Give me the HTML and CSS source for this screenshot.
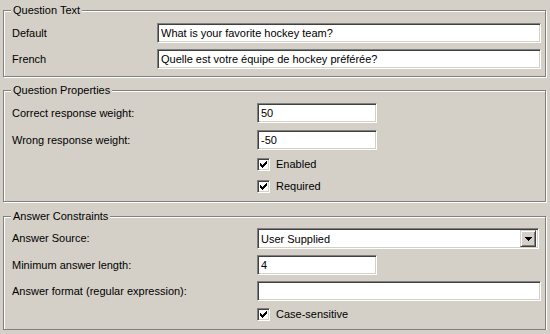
FILE: index.html
```html
<!DOCTYPE html>
<html lang="en">

<head>
    <meta charset="UTF-8">
    <title>Question Editor</title>
    <link rel="stylesheet" href="styles.css">
</head>

<body>
    <div class="dialog">
        <section class="group group-text">
            <div class="group-title">Question Text</div>
            <div class="fields">
                <label class="field-label">Default</label>
                <input class="edit" type="text" value="What is your favorite hockey team?">
                <label class="field-label">French</label>
                <input class="edit" type="text" value="Quelle est votre équipe de hockey préférée?">
            </div>
        </section>

        <section class="group group-props">
            <div class="group-title">Question Properties</div>
            <div class="fields">
                <label class="field-label">Correct response weight:</label>
                <input class="edit edit-short" type="text" value="50">
                <label class="field-label">Wrong response weight:</label>
                <input class="edit edit-short" type="text" value="-50">
                <label class="check">
                    <span class="check-box">
                        <svg viewBox="0 0 7 7" width="7" height="7">
                            <path d="M0 2h1v3H0zM1 3h1v3H1zM2 4h1v3H2zM3 3h1v3H3zM4 2h1v3H4zM5 1h1v3H5zM6 0h1v3H6z" />
                        </svg>
                    </span>
                    Enabled
                </label>
                <label class="check">
                    <span class="check-box">
                        <svg viewBox="0 0 7 7" width="7" height="7">
                            <path d="M0 2h1v3H0zM1 3h1v3H1zM2 4h1v3H2zM3 3h1v3H3zM4 2h1v3H4zM5 1h1v3H5zM6 0h1v3H6z" />
                        </svg>
                    </span>
                    Required
                </label>
            </div>
        </section>

        <section class="group group-answer">
            <div class="group-title">Answer Constraints</div>
            <div class="fields">
                <label class="field-label">Answer Source:</label>
                <div class="combo">
                    <span class="combo-text">User Supplied</span>
                    <span class="combo-button">
                        <svg viewBox="0 0 7 4" width="7" height="4">
                            <path d="M0 0h7v1H6v1H5v1H4v1H3V3H2V2H1V1H0z" />
                        </svg>
                    </span>
                </div>
                <label class="field-label">Minimum answer length:</label>
                <input class="edit edit-short" type="text" value="4">
                <label class="field-label">Answer format (regular expression):</label>
                <input class="edit" type="text" value="">
                <label class="check">
                    <span class="check-box">
                        <svg viewBox="0 0 7 7" width="7" height="7">
                            <path d="M0 2h1v3H0zM1 3h1v3H1zM2 4h1v3H2zM3 3h1v3H3zM4 2h1v3H4zM5 1h1v3H5zM6 0h1v3H6z" />
                        </svg>
                    </span>
                    Case-sensitive
                </label>
            </div>
        </section>
    </div>
</body>

</html>
```

FILE: styles.css
```css
body {
    margin: 0;
    background-color: #d4d0c8;
    font-family: 'Liberation Sans', Arial, sans-serif;
    font-size: 11px;
    color: #000;
}

.dialog {
    width: 543px;
    padding: 10px 0 0 3px;
    display: flex;
    flex-direction: column;
    gap: 13px;
}

/* marco grabado estilo Windows */
.group {
    position: relative;
    border: 1px solid #808080;
    box-shadow: inset 1px 1px 0 #fff, 1px 1px 0 #fff;
    padding: 12px 4px 7px 8px;
}

.group-answer {
    margin-top: 1px;
    padding-top: 11px;
}

.group-title {
    position: absolute;
    top: -7px;
    left: 7px;
    padding: 0 2px;
    line-height: 13px;
    background-color: #d4d0c8;
}

.fields {
    display: grid;
    grid-template-columns: 145px 1fr;
    row-gap: 6px;
    align-items: center;
}

.group-props .fields,
.group-answer .fields {
    grid-template-columns: 245px 1fr;
}

.group-props .fields {
    row-gap: 7px;
}

.field-label {
    line-height: 13px;
}

.edit {
    box-sizing: border-box;
    width: 100%;
    height: 20px;
    margin: 0;
    padding: 0 3px;
    border: 1px solid;
    border-color: #808080 #fff #fff #808080;
    box-shadow: inset 1px 1px 0 #404040, inset -1px -1px 0 #d4d0c8;
    background-color: #fff;
    font: inherit;
    color: #000;
    outline: none;
}

.edit-short {
    width: 120px;
}

.combo {
    box-sizing: border-box;
    width: 282px;
    height: 21px;
    display: flex;
    align-items: center;
    justify-content: space-between;
    padding: 2px;
    border: 1px solid;
    border-color: #808080 #fff #fff #808080;
    box-shadow: inset 1px 1px 0 #404040, inset -1px -1px 0 #d4d0c8;
    background-color: #fff;
}

.combo-text {
    padding-left: 1px;
}

.combo-button {
    box-sizing: border-box;
    width: 16px;
    height: 17px;
    display: flex;
    justify-content: center;
    align-items: center;
    background-color: #d4d0c8;
    border: 1px solid;
    border-color: #d4d0c8 #404040 #404040 #d4d0c8;
    box-shadow: inset 1px 1px 0 #fff, inset -1px -1px 0 #808080;
}

.combo-button svg,
.check-box svg {
    display: block;
    fill: #000;
}

.check {
    grid-column: 2;
    height: 15px;
    display: flex;
    align-items: center;
    gap: 6px;
    line-height: 13px;
}

.check-box {
    box-sizing: border-box;
    width: 13px;
    height: 13px;
    display: flex;
    justify-content: center;
    align-items: center;
    border: 1px solid;
    border-color: #808080 #fff #fff #808080;
    box-shadow: inset 1px 1px 0 #404040, inset -1px -1px 0 #d4d0c8;
    background-color: #fff;
}
```
